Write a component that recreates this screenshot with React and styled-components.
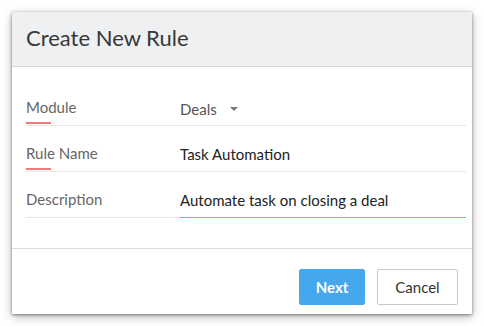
import React from "react";
import styled, { createGlobalStyle } from "styled-components";

const GlobalStyle = createGlobalStyle`
	html, body {
		margin: 0;
		padding: 0;
		background: #ffffff;
	}
	body {
		font-family: "Lato", "Liberation Sans", sans-serif;
	}
`;

const Page = styled.div`
	width: 484px;
	height: 326px;
	padding: 12px;
	box-sizing: border-box;
`;

const Dialog = styled.div`
	width: 460px;
	height: 302px;
	background: #fff;
	display: flex;
	flex-direction: column;
	box-shadow: 0 1px 3px rgba(0, 0, 0, 0.45), 0 3px 10px rgba(0, 0, 0, 0.25);
`;

const Header = styled.div`
	height: 55px;
	flex-shrink: 0;
	background: #eff0f2;
	border-bottom: 1px solid #d3d5d8;
	display: flex;
	align-items: center;
	padding: 0 14px 4px;
	box-sizing: border-box;
	font-size: 22px;
	color: #383838;
`;

const Body = styled.div`
	flex: 1;
	padding: 13px 6px 0 14px;
	border-bottom: 1px solid #dcdcdc;
`;

const Row = styled.div`
	display: flex;
	align-items: stretch;
	height: 46px;
	box-sizing: border-box;
	border-bottom: 1px solid #e6e6e6;
`;

const Label = styled.div`
	width: 154px;
	position: relative;
	display: flex;
	align-items: center;
	font-size: 15px;
	color: #666;
	padding-top: 9px;
	box-sizing: border-box;

	&::after {
		content: "";
		display: ${({ $required }) => ($required ? "block" : "none")};
		position: absolute;
		left: 0;
		bottom: 1px;
		width: 25px;
		height: 2px;
		background: #f07a78;
	}
`;

const Value = styled.div`
	flex: 1;
	display: flex;
	align-items: center;
	gap: 13px;
	font-size: 15px;
	color: ${({ $muted }) => ($muted ? "#555" : "#222")};
	padding-top: ${({ $muted }) => ($muted ? "12px" : "10px")};
	box-sizing: border-box;
	box-shadow: ${({ $focus }) => ($focus ? "0 1px 0 #55bdea" : "none")};
`;

const Caret = styled.span`
	width: 0;
	height: 0;
	border-left: 4px solid transparent;
	border-right: 4px solid transparent;
	border-top: 4px solid #777;
`;

const Footer = styled.div`
	height: 65px;
	flex-shrink: 0;
	display: flex;
	align-items: center;
	justify-content: flex-end;
	gap: 12px;
	padding: 11px 14px 0;
	box-sizing: border-box;
`;

const Button = styled.button`
	width: ${({ $w }) => $w}px;
	height: 36px;
	padding: 0;
	border-radius: 2px;
	font-family: inherit;
	font-size: 15px;
	font-weight: ${({ $primary }) => ($primary ? 700 : 400)};
	color: ${({ $primary }) => ($primary ? "#fff" : "#333")};
	background: ${({ $primary }) => ($primary ? "#45a7ee" : "#fff")};
	border: 1px solid ${({ $primary }) => ($primary ? "#45a7ee" : "#c8c8c8")};
`;

const App = () => {
	return (
		<Page>
			<GlobalStyle />
			<Dialog>
				<Header>Create New Rule</Header>
				<Body>
					<Row>
						<Label $required>Module</Label>
						<Value $muted>
							Deals <Caret />
						</Value>
					</Row>
					<Row>
						<Label $required>Rule Name</Label>
						<Value>Task Automation</Value>
					</Row>
					<Row>
						<Label>Description</Label>
						<Value $focus>Automate task on closing a deal</Value>
					</Row>
				</Body>
				<Footer>
					<Button $primary $w={66}>Next</Button>
					<Button $w={81}>Cancel</Button>
				</Footer>
			</Dialog>
		</Page>
	);
};

export default App;
